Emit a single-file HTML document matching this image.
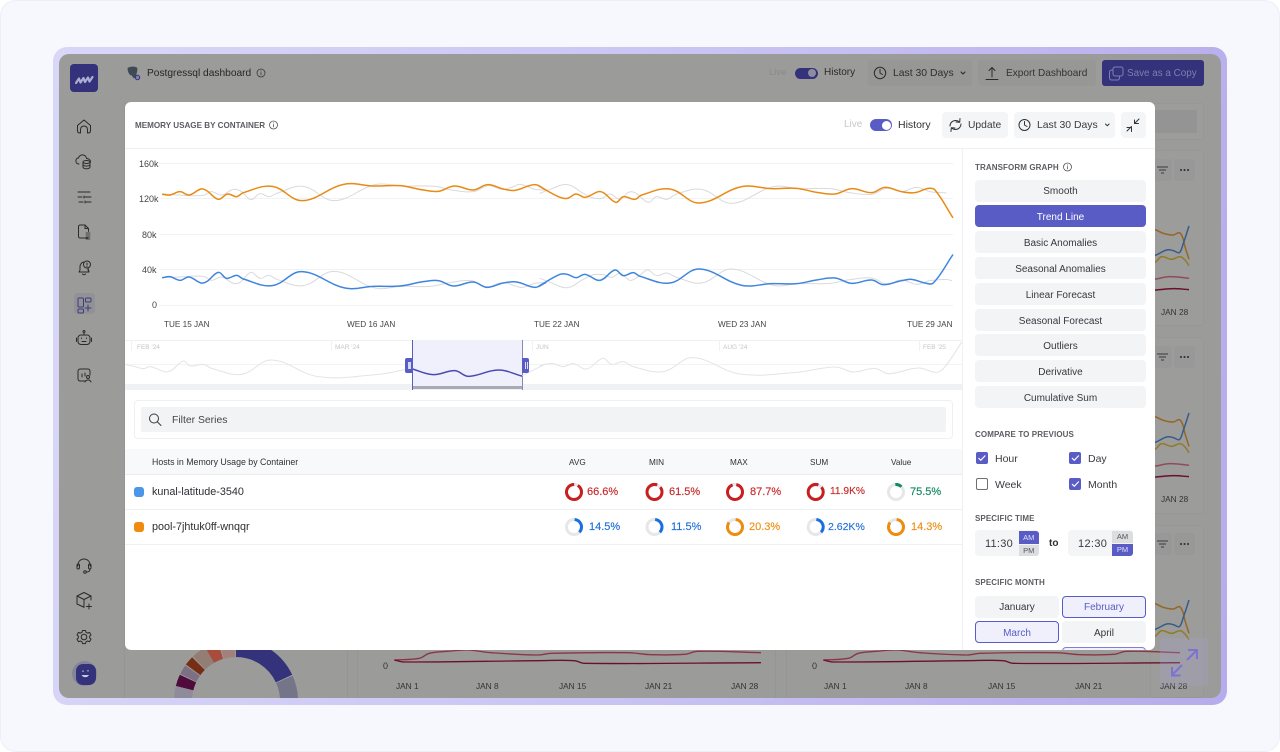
<!DOCTYPE html>
<html lang="en">
<head>
<meta charset="utf-8">
<title>Postgressql dashboard</title>
<style>
html,body{margin:0;padding:0;width:1280px;height:752px;overflow:hidden;background:#fff;font-family:"Liberation Sans",sans-serif}
#page{position:absolute;left:0;top:0;width:1278px;height:750px;background:#f7f8fe;border:1px solid #eceefa;border-radius:16px}
#frame{position:absolute;left:53px;top:47px;width:1174px;height:658px;border-radius:14px;background:linear-gradient(100deg,#d9d7f8 0%,#c8c2f2 55%,#b6abec 100%)}
#dash{position:absolute;left:59px;top:54px;width:1162px;height:644px;border-radius:10px;overflow:hidden;background:#9b9b9a}
#bg{position:absolute;left:0;top:0;width:1280px;height:752px;overflow:hidden}
.abs{position:absolute}
.t{position:absolute;white-space:nowrap;line-height:12px;transform:translateY(-6px)}
.card{position:absolute;background:#9c9c9b;border:1px solid #979797;border-radius:3px;box-sizing:border-box}
#modal{position:absolute;left:125px;top:102px;width:1030px;height:548px;background:#fff;border-radius:6px;overflow:hidden}
.btn{position:absolute;background:#f4f5f6;border-radius:4px}
.tb{position:absolute;width:171px;height:22px;background:#f3f4f6;border-radius:4px;text-align:center;font-size:10px;line-height:26px;color:#37383c}
.lab{font-size:8px;font-weight:bold;color:#5c5d62;letter-spacing:.1px}
.pct{font-size:11px;-webkit-text-stroke:.15px currentColor}
.hd{font-size:8.200px;color:#303136}
.ax{font-size:8.200px;color:#44454a}
.bx{font-size:8.300px;color:#333}
.cb{position:absolute;width:12px;height:12px;border-radius:2px;background:#5a5cc6;box-sizing:border-box}
.mb{position:absolute;width:84px;height:22px;border-radius:4px;text-align:center;font-size:10px;line-height:24px;background:#f3f4f6;color:#37383c;box-sizing:border-box}
.mbs{background:#eff0fb;border:1px solid #5a5cc6;color:#5a5cc6;line-height:22px}
svg{position:absolute;overflow:visible}
</style>
</head>
<body>
<div id="page"></div>
<div id="frame"></div>
<div id="dash"></div>

<div id="bg">
  <div style="position:absolute;left:59px;top:54px;width:1162px;height:644px;border-radius:10px;overflow:hidden">
    <div style="position:absolute;left:-59px;top:-54px;width:1280px;height:752px">

      <div class="abs" style="left:124px;top:102px;width:1px;height:596px;background:#959595"></div>
      <div class="abs" style="left:347px;top:640px;width:1px;height:58px;background:#959595"></div>
      <div class="abs" style="left:357px;top:640px;width:1px;height:58px;background:#959595"></div>
      <div class="abs" style="left:775px;top:640px;width:1px;height:58px;background:#959595"></div>
      <div class="abs" style="left:786px;top:640px;width:1px;height:58px;background:#959595"></div>

      <div class="card" style="left:1150px;top:103px;width:54px;height:37px"></div>
      <div class="abs" style="left:1150px;top:110px;width:47px;height:23px;background:#949494"></div>
      <div class="card" style="left:1150px;top:150px;width:54px;height:176px"></div>
      <div class="card" style="left:1150px;top:337px;width:54px;height:177px"></div>
      <div class="card" style="left:1150px;top:525px;width:54px;height:173px"></div>
      <div class="abs" style="left:1150px;top:159px;width:22px;height:22px;background:#989898;border-radius:3px"></div>
      <div class="abs" style="left:1174px;top:159px;width:21px;height:22px;background:#989898;border-radius:3px"></div>
      <div class="abs" style="left:1150px;top:346px;width:22px;height:22px;background:#989898;border-radius:3px"></div>
      <div class="abs" style="left:1174px;top:346px;width:21px;height:22px;background:#989898;border-radius:3px"></div>
      <div class="abs" style="left:1150px;top:533px;width:22px;height:22px;background:#989898;border-radius:3px"></div>
      <div class="abs" style="left:1174px;top:533px;width:21px;height:22px;background:#989898;border-radius:3px"></div>

      <svg width="1280" height="752" style="left:0;top:0" fill="none">
        <g transform="translate(1140,100) scale(.3333)" stroke-width="4.500" stroke-linejoin="round">
          <polyline stroke="#966626" points="30,385 48,390 70,400 100,405 118,398 128,412 135,440 147,478"/>
          <polyline stroke="#365c88" points="30,468 48,465 80,450 100,452 118,458 130,430 147,378"/>
          <polyline stroke="#927a26" points="30,495 48,485 65,470 95,478 120,470 135,480 147,497"/>
          <polyline stroke="#8f4c58" points="30,540 48,537 90,530 147,535"/>
          <polyline stroke="#6c0f2e" points="30,572 48,570 100,566 147,569"/>
        </g>
        <g transform="translate(1140,287) scale(.3333)" stroke-width="4.500" stroke-linejoin="round">
          <polyline stroke="#966626" points="30,385 48,390 70,400 100,405 118,398 128,412 135,440 147,478"/>
          <polyline stroke="#365c88" points="30,468 48,465 80,450 100,452 118,458 130,430 147,378"/>
          <polyline stroke="#927a26" points="30,495 48,485 65,470 95,478 120,470 135,480 147,497"/>
          <polyline stroke="#8f4c58" points="30,540 48,537 90,530 147,535"/>
          <polyline stroke="#6c0f2e" points="30,572 48,570 100,566 147,569"/>
        </g>
        <g transform="translate(1140,474) scale(.3333)" stroke-width="4.500" stroke-linejoin="round">
          <polyline stroke="#966626" points="30,385 48,390 70,400 100,405 118,398 128,412 135,440 147,478"/>
          <polyline stroke="#365c88" points="30,468 48,465 80,450 100,452 118,458 130,430 147,378"/>
          <polyline stroke="#927a26" points="30,495 48,485 65,470 95,478 120,470 135,480 147,497"/>
        </g>
        <g transform="translate(780,640) scale(.3333)" stroke-width="4" stroke-linejoin="round">
          <polyline stroke="#8a3644" points="130,60 205,55 235,40 290,34 350,30 420,38 560,45 600,40 830,38 900,44 1000,43 1040,34 1200,38"/>
          <polyline stroke="#6c0f2e" points="130,60 160,66 560,62 670,62 700,70 1200,68"/>
        </g>
        <g transform="translate(351,640) scale(.3333)" stroke-width="4" stroke-linejoin="round">
          <polyline stroke="#8a3644" points="130,60 205,55 235,40 290,34 350,30 420,38 560,45 600,40 830,38 900,44 1000,43 1040,34 1230,38"/>
          <polyline stroke="#6c0f2e" points="130,60 160,66 560,62 670,62 700,70 1230,68"/>
        </g>
        <g stroke="#3a3a3a" stroke-width="1">
          <path d="M1157 167h11M1159 170h7M1161 173h3"/>
          <path d="M1157 354h11M1159 357h7M1161 360h3"/>
          <path d="M1157 541h11M1159 544h7M1161 547h3"/>
        </g>
        <g fill="#2a2a2a">
          <circle cx="1181" cy="170" r="1"/><circle cx="1184.500" cy="170" r="1"/><circle cx="1188" cy="170" r="1"/>
          <circle cx="1181" cy="357" r="1"/><circle cx="1184.500" cy="357" r="1"/><circle cx="1188" cy="357" r="1"/>
          <circle cx="1181" cy="544" r="1"/><circle cx="1184.500" cy="544" r="1"/><circle cx="1188" cy="544" r="1"/>
        </g>
        <g stroke-width="18">
          <circle cx="236" cy="701" r="53" pathLength="360" stroke="#33327a" stroke-dasharray="65 360" transform="rotate(-90 236 701)"/>
          <circle cx="236" cy="701" r="53" pathLength="360" stroke="#75758a" stroke-dasharray="35 360" transform="rotate(-24 236 701)"/>
          <circle cx="236" cy="701" r="53" pathLength="360" stroke="#a0817b" stroke-dasharray="15 360" transform="rotate(-106 236 701)"/>
          <circle cx="236" cy="701" r="53" pathLength="360" stroke="#a84c3e" stroke-dasharray="13 360" transform="rotate(-120 236 701)"/>
          <circle cx="236" cy="701" r="53" pathLength="360" stroke="#927e73" stroke-dasharray="14 360" transform="rotate(-134 236 701)"/>
          <circle cx="236" cy="701" r="53" pathLength="360" stroke="#762f14" stroke-dasharray="9 360" transform="rotate(-144 236 701)"/>
          <circle cx="236" cy="701" r="53" pathLength="360" stroke="#7c7184" stroke-dasharray="9 360" transform="rotate(-154 236 701)"/>
          <circle cx="236" cy="701" r="53" pathLength="360" stroke="#4e0b3c" stroke-dasharray="11 360" transform="rotate(-166 236 701)"/>
          <circle cx="236" cy="701" r="53" pathLength="360" stroke="#908b9a" stroke-dasharray="24 360" transform="rotate(-190 236 701)"/>
        </g>
      </svg>

      <span class="t bx" style="left:1161px;top:312px">JAN 28</span>
      <span class="t bx" style="left:1161px;top:499px">JAN 28</span>
      <span class="t" style="left:383px;top:666px;font-size:9px;color:#333">0</span>
      <span class="t" style="left:812px;top:666px;font-size:9px;color:#333">0</span>
      <span class="t bx" style="left:396px;top:686px">JAN 1</span>
      <span class="t bx" style="left:476px;top:686px">JAN 8</span>
      <span class="t bx" style="left:559px;top:686px">JAN 15</span>
      <span class="t bx" style="left:645px;top:686px">JAN 21</span>
      <span class="t bx" style="left:731px;top:686px">JAN 28</span>
      <span class="t bx" style="left:824px;top:686px">JAN 1</span>
      <span class="t bx" style="left:905px;top:686px">JAN 8</span>
      <span class="t bx" style="left:988px;top:686px">JAN 15</span>
      <span class="t bx" style="left:1075px;top:686px">JAN 21</span>
      <span class="t bx" style="left:1160px;top:686px">JAN 28</span>

      <div class="abs" style="left:70px;top:64px;width:28px;height:28px;border-radius:4px;background:#33327a"></div>
      <div class="abs" style="left:74px;top:293px;width:21px;height:21px;border-radius:3px;background:#929296"></div>
      <div class="abs" style="left:72px;top:661px;width:25px;height:25px;border-radius:50%;background:#85859a"></div>
      <div class="abs" style="left:76px;top:664px;width:20px;height:21px;border-radius:7px;background:#33327a"></div>

      <svg width="1280" height="752" style="left:0;top:0" fill="none" stroke="#2b2b2b" stroke-width="1" stroke-linecap="round" stroke-linejoin="round">
        <path d="M76 83l3-4.500 1.500 4 3-4.500 1.500 4 3-4.500 1.500 4 3-4.500" stroke="#aeaed2" stroke-width="2.200"/>
        <path d="M77.500 125.500l6.500-5.500 6.500 5.500v5c0 1.500-1 2.500-2.500 2.500h-.5v-3.500c0-2-1.500-3.500-3.500-3.500s-3.500 1.500-3.500 3.500v3.500h-.5c-1.500 0-2.500-1-2.500-2.500z"/>
        <g transform="translate(0,-1)">
          <path d="M79 165c-2.500 0-3.500-2-3-4 .3-1.500 1.500-2 2.500-2 .5-2 2.500-3.500 4.500-3 2 .2 3.500 1.800 3.500 3.500 2 0 4 1.200 4 3.500"/>
          <ellipse cx="86.500" cy="163" rx="3.500" ry="1.500"/>
          <path d="M83 163v5c0 1 1.500 1.800 3.500 1.800s3.500-.8 3.500-1.800v-5M83 165.500c0 1 1.500 1.500 3.500 1.500s3.500-.5 3.500-1.500"/>
        </g>
        <path d="M78 192h12M78 197h4M85 197h6M83 202h-4M86 202h5"/>
        <path d="M84 196v2M85 201v2"/>
        <path d="M88 238h-8c-.8 0-1.500-.7-1.500-1.500v-10c0-.8.700-1.500 1.500-1.500h5l3.500 3.500v3"/>
        <path d="M85 225v3.500h3.500"/>
        <path d="M86 233h4M86 235h4M86 237h4M86 239h4" stroke-width=".8"/>
        <path d="M79 272c0 0 1-1 1-2.500v-3c0-2 1.500-4 3.500-4.500M88 268v1.500c0 1.500 1 2.500 1 2.500zM79 272h10M82.500 274c.5 1 2.500 1 3 0"/>
        <circle cx="87" cy="264.500" r="3.500"/>
        <path d="M87 263v2M87 266.200v.3"/>
        <g stroke="#3c3c78">
          <rect x="78" y="298" width="5.500" height="9" rx="1"/>
          <rect x="78" y="309" width="5.500" height="4" rx="1"/>
          <rect x="85.500" y="298" width="5.500" height="4" rx="1"/>
          <path d="M88 305v6M85 308h6"/>
        </g>
        <rect x="78" y="335" width="12" height="9.500" rx="3"/>
        <path d="M84 335v-2.500M76.500 338v3.500M91.500 338v3.500M82 341.500h4"/>
        <circle cx="84" cy="331.500" r="1"/>
        <path d="M81.500 338v.5M86.500 338v.5"/>
        <path d="M85 381h-5c-1 0-2-1-2-2v-8c0-1 1-2 2-2h8c1 0 2 1 2 2v4"/>
        <path d="M82 377v-3M85 376v-3"/>
        <circle cx="88" cy="377" r="1.500"/>
        <path d="M85 382c.5-1.500 1.500-2 3-2s2.500.5 3 2"/>
        <path d="M78 566v-1c0-3.500 2.700-6 6-6s6 2.500 6 6v1"/>
        <rect x="77" y="564" width="2.500" height="5" rx="1.200"/>
        <rect x="88.500" y="564" width="2.500" height="5" rx="1.200"/>
        <path d="M90 569c0 2-1.500 3-3.500 3"/>
        <circle cx="85" cy="572" r="1.300"/>
        <path d="M91 600v-4l-7-3.500-7 3.500v8l6.500 3"/>
        <path d="M77 596l7 3.500 7-3.500M84 599.500v8"/>
        <path d="M89 604v5M86.500 606.500h5"/>
        <circle cx="84" cy="637" r="2.800"/>
        <path d="M82.500 630.500h3l.5 1.800 1.700.8 1.800-.7 1.500 2.600-1.400 1.300v1.500l1.400 1.300-1.500 2.600-1.800-.7-1.700.8-.5 1.800h-3l-.5-1.800-1.700-.8-1.800.7-1.500-2.600 1.400-1.300v-1.500l-1.400-1.300 1.500-2.600 1.800.7 1.700-.8z"/>
        <path d="M83 671v.5M88 670.500v.5" stroke="#c0c0dc" stroke-width="1.200"/>
        <path d="M82 675.500c1.500 2 5 2 6.500 0z" fill="#d4d4e6" stroke="#d4d4e6" stroke-width=".5"/>
        <path d="M128 68c2-1.500 8-1.500 9 0 .5 2-.5 5-1 7-.5 1.500-1 3-2 3-1 0-1.500-2-2-3-1 .5-2 0-2.500-1-1-1.500-2-4-1.500-6z" fill="#3e4a55" stroke="#3e4a55" stroke-width=".5"/>
        <circle cx="137.500" cy="77.500" r="2.200" stroke="#33327a" fill="#8080a8"/>
        <circle cx="261" cy="73" r="4" stroke="#3a3a3a" stroke-width=".8"/>
        <path d="M261 72.500v2.500M261 70.800v.3" stroke="#3a3a3a" stroke-width=".8"/>
      </svg>

      <span class="t" style="left:147px;top:74px;font-size:10.200px;color:#262626">Postgressql dashboard</span>

      <span class="t" style="left:769px;top:73px;font-size:9.500px;color:#8a8a8a">Live</span>
      <div class="abs" style="left:795px;top:67.500px;width:23px;height:11px;border-radius:6px;background:#33327a"></div>
      <div class="abs" style="left:808px;top:69px;width:8px;height:8px;border-radius:50%;background:#8d8d9d"></div>
      <span class="t" style="left:824px;top:73px;font-size:10px;color:#2a2a2a">History</span>
      <div class="abs" style="left:868px;top:60px;width:104px;height:26px;border-radius:4px;background:#979796"></div>
      <svg width="1280" height="752" style="left:0;top:0" fill="none" stroke="#2b2b2b" stroke-width="1" stroke-linecap="round" stroke-linejoin="round">
        <circle cx="880" cy="73" r="5.700"/>
        <path d="M880 69.500v3.500l2.500 1.500"/>
        <path d="M961 72l2 2 2-2" stroke-width="1.100"/>
      </svg>
      <span class="t" style="left:893px;top:74px;font-size:10.400px;color:#2f2f2f">Last 30 Days</span>
      <div class="abs" style="left:978px;top:60px;width:118px;height:26px;border-radius:4px;background:#979796"></div>
      <svg width="1280" height="752" style="left:0;top:0" fill="none" stroke="#2b2b2b" stroke-width="1" stroke-linecap="round" stroke-linejoin="round">
        <path d="M992 77v-9M989 70.500l3-3 3 3M986 79.500h12"/>
      </svg>
      <span class="t" style="left:1006px;top:74px;font-size:10.100px;color:#333">Export Dashboard</span>
      <div class="abs" style="left:1102px;top:60px;width:102px;height:26px;border-radius:3px;background:#33327a"></div>
      <svg width="1280" height="752" style="left:0;top:0" fill="none" stroke="#7f7fb4" stroke-width="1" stroke-linecap="round" stroke-linejoin="round">
        <rect x="1113" y="67" width="10" height="9" rx="2"/>
        <path d="M1113 70h-1.500c-1 0-2 1-2 2v6c0 1 1 2 2 2h6c1 0 2-1 2-2v-2"/>
      </svg>
      <span class="t" style="left:1127px;top:74px;font-size:9.900px;color:#7f7fb0">Save as a Copy</span>

      <div class="abs" style="left:1160px;top:638px;width:48px;height:48px;border-radius:3px;background:rgba(165,160,200,.28)"></div>
      <svg width="1280" height="752" style="left:0;top:0" fill="none" stroke="#7b74d2" stroke-width="2">
        <path d="M1172 675l10-10M1172 667v8.500h8.500"/>
        <path d="M1187 660l9.500-9.500M1188 650h9v9"/>
      </svg>
    </div>
  </div>
</div>

<div id="modal">
  <div style="position:absolute;left:-125px;top:-102px;width:1280px;height:752px">
    <div class="abs" style="left:125px;top:148px;width:1030px;height:1px;background:#eef0f2"></div>
    <div class="abs" style="left:962px;top:148px;width:1px;height:502px;background:#eef0f2"></div>
    <span class="t lab" style="left:135px;top:126px;letter-spacing:0;font-size:8.100px">MEMORY USAGE BY CONTAINER</span>
    <span class="t" style="left:844px;top:125px;font-size:10px;color:#c6c7ca">Live</span>
    <div class="abs" style="left:870px;top:119px;width:22px;height:12px;border-radius:6px;background:#5a5cc6"></div>
    <div class="abs" style="left:882px;top:120.500px;width:9px;height:9px;border-radius:50%;background:#fff"></div>
    <span class="t" style="left:898px;top:125px;font-size:10.500px;color:#2d2e33">History</span>
    <div class="btn" style="left:942px;top:112px;width:66px;height:26px"></div>
    <span class="t" style="left:968px;top:126px;font-size:10.300px;color:#3a3b40">Update</span>
    <div class="btn" style="left:1014px;top:112px;width:101px;height:26px"></div>
    <span class="t" style="left:1037px;top:126px;font-size:10.400px;color:#3a3b40">Last 30 Days</span>
    <div class="btn" style="left:1121px;top:112px;width:25px;height:26px"></div>

    <svg width="1280" height="752" style="left:0;top:0" fill="none" stroke-linecap="round" stroke-linejoin="round">
      <g stroke="#55565b" stroke-width=".8">
        <circle cx="273.500" cy="125" r="4"/><path d="M273.500 124.500v2.500M273.500 122.800v.3"/>
        <circle cx="1067.500" cy="167" r="4"/><path d="M1067.500 166.500v2.500M1067.500 164.800v.3"/>
      </g>
      <g stroke="#303136" stroke-width="1">
        <path d="M950 126c0-3 2.500-5.500 5.500-5.500 1.500 0 3 .6 4 1.600M961 124c0 3-2.500 5.500-5.500 5.500-1.500 0-3-.6-4-1.600"/>
        <path d="M960 118.500l-.3 3.800-3.700-.3M951 131.500l.3-3.800 3.700.3"/>
        <circle cx="1024.500" cy="125" r="5.500"/>
        <path d="M1024.500 121.500v3.500l2.500 1.500"/>
        <path d="M1105.500 124l1.800 1.800 1.800-1.800"/>
        <path d="M1127 131l4.500-4.500M1127 127.500h4.500v4M1139 119l-4.500 4.500M1134.500 120v3.500h4"/>
      </g>
    </svg>

    <div class="abs" style="left:159px;top:163px;width:794px;height:1px;background:#f1f2f4"></div>
    <div class="abs" style="left:159px;top:198px;width:794px;height:1px;background:#f1f2f4"></div>
    <div class="abs" style="left:159px;top:234px;width:794px;height:1px;background:#f1f2f4"></div>
    <div class="abs" style="left:159px;top:269px;width:794px;height:1px;background:#f1f2f4"></div>
    <div class="abs" style="left:159px;top:305px;width:794px;height:1px;background:#f1f2f4"></div>
    <span class="t" style="left:139px;top:164px;font-size:9px;color:#44454a">160k</span>
    <span class="t" style="left:139px;top:199px;font-size:9px;color:#44454a">120k</span>
    <span class="t" style="left:142px;top:235px;font-size:9px;color:#44454a">80k</span>
    <span class="t" style="left:142px;top:270px;font-size:9px;color:#44454a">40k</span>
    <span class="t" style="left:152px;top:305px;font-size:9px;color:#44454a">0</span>
    <span class="t ax" style="left:164px;top:325px">TUE 15 JAN</span>
    <span class="t ax" style="left:347px;top:325px">WED 16 JAN</span>
    <span class="t ax" style="left:534px;top:325px">TUE 22 JAN</span>
    <span class="t ax" style="left:718px;top:325px">WED 23 JAN</span>
    <span class="t ax" style="left:907px;top:325px">TUE 29 JAN</span>

    <svg width="1280" height="752" style="left:0;top:0" fill="none" stroke-linejoin="round" stroke-linecap="round">
      <g transform="translate(125,150) scale(.33333)" stroke-width="3" stroke="#d9dadc">
        <polyline points="113,131 160,135 235,136 258,125 290,135 325,118 350,125 378,149 405,131 432,140 455,130 535,109 628,152 750,104 830,108 930,109 980,120 1045,125 1090,107 1130,118 1160,112 1185,103 1230,118 1260,120"/>
        <polyline points="113,383 160,381 235,379 260,391 290,381 325,400 345,397 378,367 405,385 432,376 455,388 535,407 628,364 750,414 830,409 915,409 985,396 1040,392 1085,410 1135,398 1190,412 1230,400 1260,398"/>
      </g>
      <g transform="translate(540,150) scale(.33333)" stroke-width="3" stroke="#d9dadc">
        <polyline points="0,130 30,118 82,104 130,130 155,143 185,145 210,132 240,148 265,127 285,128 325,157 350,140 380,148 410,132 485,118 575,160 700,110 775,116 870,116 930,128 995,133 1040,115 1085,125 1130,112 1170,125 1218,129"/>
        <polyline points="0,385 30,397 82,413 130,388 160,374 190,374 215,382 240,370 270,391 295,380 322,360 350,377 380,369 410,382 485,399 575,357 700,406 775,401 870,400 930,389 995,384 1040,402 1085,390 1130,403 1170,392 1218,388 1235,392"/>
      </g>
      <g transform="translate(125,150) scale(.33333)" stroke-width="4.500">
        <polyline stroke="#e98a14" points="113,133 135,135 165,125 192,135 228,117 245,122 280,148 308,132 335,140 355,128 442,109 532,152 656,103 745,108 825,107 895,120 940,124 988,108 1045,120 1088,104 1135,117 1170,121 1230,104 1262,120"/>
        <polyline stroke="#3f85de" points="113,383 135,380 165,391 192,381 228,399 245,395 280,367 305,385 335,376 355,387 442,407 530,365 660,414 745,409 825,408 895,395 940,392 985,408 1045,396 1085,412 1135,399 1175,396 1230,412 1262,398"/>
      </g>
      <g transform="translate(540,150) scale(.33333)" stroke-width="4.500">
        <polyline stroke="#e98a14" points="-3,108 55,140 82,145 108,132 135,142 175,125 190,128 228,157 250,140 285,148 305,135 390,117 478,159 605,110 695,116 770,115 830,127 885,132 935,116 995,128 1035,112 1085,125 1125,128 1165,115 1185,120 1238,202"/>
        <polyline stroke="#3f85de" points="-3,408 60,373 82,373 108,383 135,373 180,391 225,360 250,377 280,368 300,379 390,399 478,357 605,406 695,401 770,401 830,390 885,384 935,400 995,390 1030,404 1085,392 1115,388 1155,399 1180,399 1238,315"/>
      </g>
    </svg>

    <div class="abs" style="left:125px;top:340px;width:837px;height:1px;background:#eef0f2"></div>
    <div class="abs" style="left:125px;top:364px;width:837px;height:1px;background:#f2f3f4"></div>
    <div class="abs" style="left:125px;top:384px;width:837px;height:6px;background:#f0f1f3"></div>
    <div class="abs" style="left:131px;top:341px;width:1px;height:10px;background:#f0f1f3"></div>
    <div class="abs" style="left:331px;top:341px;width:1px;height:10px;background:#f0f1f3"></div>
    <div class="abs" style="left:532px;top:341px;width:1px;height:10px;background:#f0f1f3"></div>
    <div class="abs" style="left:719px;top:341px;width:1px;height:10px;background:#f0f1f3"></div>
    <div class="abs" style="left:919px;top:341px;width:1px;height:10px;background:#f0f1f3"></div>
    <span class="t" style="left:137px;top:348px;font-size:6.500px;color:#c4c5ca">FEB '24</span>
    <span class="t" style="left:335px;top:348px;font-size:6.500px;color:#c4c5ca">MAR '24</span>
    <span class="t" style="left:536px;top:348px;font-size:6.500px;color:#c4c5ca">JUN</span>
    <span class="t" style="left:723px;top:348px;font-size:6.500px;color:#c4c5ca">AUG '24</span>
    <span class="t" style="left:923px;top:348px;font-size:6.500px;color:#c4c5ca">FEB '25</span>
    <div class="abs" style="left:412px;top:340px;width:110px;height:50px;background:#eff0fb"></div>
    <div class="abs" style="left:412px;top:386px;width:110px;height:3px;background:#a9a9b0"></div>
    <div class="abs" style="left:412px;top:340px;width:1px;height:50px;background:#5a5cc6"></div>
    <div class="abs" style="left:521.500px;top:340px;width:1px;height:50px;background:#8788b8"></div>
    <svg width="1280" height="752" style="left:0;top:0" fill="none" stroke-linejoin="round" stroke-linecap="round">
      <g transform="translate(125,335) scale(.33333)" stroke="#e3e4e6" stroke-width="3">
        <polyline points="0,88 30,95 55,101 75,95 130,110 175,78 195,93 235,88 260,100 350,118 440,75 580,125 760,118 840,104"/>
        <polyline points="1190,123 1225,105 1260,88"/>
      </g>
      <g transform="translate(540,335) scale(.33333)" stroke="#e3e4e6" stroke-width="3">
        <polyline points="0,92 35,85 70,95 100,86 140,102 188,70 215,88 250,80 280,95 370,110 458,68 600,117 770,112 885,96 940,111 1005,100 1045,116 1135,99 1190,112 1215,95 1265,22"/>
      </g>
      <polyline transform="translate(125,335) scale(.33333)" stroke="#4a4bb0" stroke-width="4.500" points="862,102 925,119 990,107 1030,124 1120,105 1190,123"/>
    </svg>
    <div class="abs" style="left:405px;top:358px;width:8px;height:15px;border-radius:2px 0 0 2px;background:#5a5cc6"></div>
    <div class="abs" style="left:408px;top:362px;width:2.500px;height:7px;background:#d5d6f2"></div>
    <div class="abs" style="left:522px;top:358px;width:7px;height:15px;border-radius:0 2px 2px 0;background:#5a5cc6"></div>
    <div class="abs" style="left:524.500px;top:362px;width:1px;height:7px;background:#dfe0f5"></div>
    <div class="abs" style="left:526.500px;top:362px;width:1px;height:7px;background:#dfe0f5"></div>

    <div class="abs" style="left:134px;top:400px;width:817px;height:37px;border:1px solid #eef0f2;border-radius:4px"></div>
    <div class="abs" style="left:141px;top:407px;width:805px;height:25px;background:#f2f3f5;border-radius:2px"></div>
    <svg width="1280" height="752" style="left:0;top:0" fill="none" stroke="#3a3b40" stroke-width="1" stroke-linecap="round">
      <circle cx="154" cy="418.500" r="4.500"/><path d="M157.500 422l3.500 3.500"/>
    </svg>
    <span class="t" style="left:172px;top:421px;font-size:10.400px;color:#45464b">Filter Series</span>

    <div class="abs" style="left:125px;top:449px;width:837px;height:25px;background:#f8f9fb"></div>
    <div class="abs" style="left:125px;top:474px;width:837px;height:1px;background:#e9ebee"></div>
    <div class="abs" style="left:125px;top:509px;width:837px;height:1px;background:#eef0f2"></div>
    <div class="abs" style="left:125px;top:544px;width:837px;height:1px;background:#eef0f2"></div>
    <span class="t hd" style="left:152px;top:462px;font-size:8.800px">Hosts in Memory Usage by Container</span>
    <span class="t hd" style="left:569px;top:463px;">AVG</span>
    <span class="t hd" style="left:649px;top:463px;">MIN</span>
    <span class="t hd" style="left:730px;top:463px;">MAX</span>
    <span class="t hd" style="left:810px;top:463px;">SUM</span>
    <span class="t hd" style="left:891px;top:463px;">Value</span>

    <div class="abs" style="left:134px;top:487px;width:10px;height:10px;border-radius:3px;background:#4a96e8"></div>
    <div class="abs" style="left:134px;top:522px;width:10px;height:10px;border-radius:3px;background:#ef8c0e"></div>
    <span class="t" style="left:152px;top:492px;font-size:10.800px;color:#2d2e33">kunal-latitude-3540</span>
    <span class="t" style="left:152px;top:527px;font-size:10.800px;color:#2d2e33">pool-7jhtuk0ff-wnqqr</span>

    <svg width="1280" height="752" style="left:0;top:0" fill="none" stroke-width="3">
      <g stroke="#e5e7e9">
        <circle cx="574" cy="492" r="7.500"/><circle cx="654.500" cy="492" r="7.500"/><circle cx="735" cy="492" r="7.500"/><circle cx="815.700" cy="492" r="7.500"/><circle cx="896" cy="492" r="7.500"/>
        <circle cx="574" cy="527" r="7.500"/><circle cx="654.500" cy="527" r="7.500"/><circle cx="735" cy="527" r="7.500"/><circle cx="815.700" cy="527" r="7.500"/><circle cx="896" cy="527" r="7.500"/>
      </g>
      <g stroke="#c81e1e">
        <circle cx="574" cy="492" r="7.500" pathLength="100" stroke-dasharray="92 100" transform="rotate(-60 574 492)"/>
        <circle cx="654.500" cy="492" r="7.500" pathLength="100" stroke-dasharray="92 100" transform="rotate(-40 654.500 492)"/>
        <circle cx="735" cy="492" r="7.500" pathLength="100" stroke-dasharray="92 100" transform="rotate(-80 735 492)"/>
        <circle cx="815.700" cy="492" r="7.500" pathLength="100" stroke-dasharray="92 100" transform="rotate(-40 815.700 492)"/>
      </g>
      <circle cx="896" cy="492" r="7.500" stroke="#0e8a5f" pathLength="100" stroke-dasharray="14 100" transform="rotate(-95 896 492)"/>
      <g stroke="#1a6fe0">
        <circle cx="574" cy="527" r="7.500" pathLength="100" stroke-dasharray="36 100" transform="rotate(-85 574 527)"/>
        <circle cx="654.500" cy="527" r="7.500" pathLength="100" stroke-dasharray="36 100" transform="rotate(-85 654.500 527)"/>
        <circle cx="815.700" cy="527" r="7.500" pathLength="100" stroke-dasharray="36 100" transform="rotate(-85 815.700 527)"/>
      </g>
      <g stroke="#ef8c0e">
        <circle cx="735" cy="527" r="7.500" pathLength="100" stroke-dasharray="84 100" transform="rotate(-85 735 527)"/>
        <circle cx="896" cy="527" r="7.500" pathLength="100" stroke-dasharray="84 100" transform="rotate(-85 896 527)"/>
      </g>
    </svg>

    <span class="t pct" style="left:587px;top:492px;color:#c72a2a">66.6%</span>
    <span class="t pct" style="left:669px;top:492px;color:#c72a2a">61.5%</span>
    <span class="t pct" style="left:750px;top:492px;color:#c72a2a">87.7%</span>
    <span class="t pct" style="left:830px;top:492px;color:#c72a2a;font-size:10.200px">11.9K%</span>
    <span class="t pct" style="left:910px;top:492px;color:#15875f">75.5%</span>
    <span class="t pct" style="left:589px;top:527px;color:#1f6fdc">14.5%</span>
    <span class="t pct" style="left:671px;top:527px;color:#1f6fdc">11.5%</span>
    <span class="t pct" style="left:749px;top:527px;color:#ed8f16">20.3%</span>
    <span class="t pct" style="left:828px;top:527px;color:#1f6fdc;font-size:10.500px">2.62K%</span>
    <span class="t pct" style="left:911px;top:527px;color:#ed8f16">14.3%</span>

    <span class="t lab" style="left:975px;top:168px;">TRANSFORM GRAPH</span>
    <div class="tb" style="left:975px;top:180px;line-height:23px">Smooth</div>
    <div class="tb" style="left:975px;top:205px;background:#5a5cc6;color:#fff">Trend Line</div>
    <div class="tb" style="left:975px;top:231px;">Basic Anomalies</div>
    <div class="tb" style="left:975px;top:257px;">Seasonal Anomalies</div>
    <div class="tb" style="left:975px;top:283px;">Linear Forecast</div>
    <div class="tb" style="left:975px;top:309px;">Seasonal Forecast</div>
    <div class="tb" style="left:975px;top:334px;">Outliers</div>
    <div class="tb" style="left:975px;top:360px;">Derivative</div>
    <div class="tb" style="left:975px;top:386px;">Cumulative Sum</div>

    <span class="t lab" style="left:975px;top:435px;">COMPARE TO PREVIOUS</span>
    <div class="cb" style="left:975.500px;top:452px;"></div>
    <div class="cb" style="left:1069px;top:452px;"></div>
    <div class="cb" style="left:975.500px;top:478px;background:#fff;border:1.200px solid #6f7074"></div>
    <div class="cb" style="left:1069px;top:478px;"></div>
    <svg width="1280" height="752" style="left:0;top:0" fill="none" stroke="#fff" stroke-width="1.200">
      <path d="M978.500 458l2.300 2.300 4.500-4.800"/>
      <path d="M1072 458l2.300 2.300 4.500-4.800"/>
      <path d="M1072 484l2.300 2.300 4.500-4.800"/>
    </svg>
    <span class="t" style="left:995px;top:459px;font-size:10.500px;color:#3a3b40">Hour</span>
    <span class="t" style="left:1088px;top:459px;font-size:10.500px;color:#3a3b40">Day</span>
    <span class="t" style="left:995px;top:485px;font-size:10.500px;color:#3a3b40">Week</span>
    <span class="t" style="left:1088px;top:485px;font-size:10.500px;color:#3a3b40">Month</span>

    <span class="t lab" style="left:975px;top:519px;">SPECIFIC TIME</span>
    <div class="btn" style="left:975px;top:530px;width:64px;height:26px"></div>
    <div class="btn" style="left:1068px;top:530px;width:65px;height:26px"></div>
    <span class="t" style="left:985px;top:544px;font-size:11px;letter-spacing:.25px;color:#3a3b40">11:30</span>
    <span class="t" style="left:1078px;top:544px;font-size:11px;letter-spacing:.35px;color:#3a3b40">12:30</span>
    <span class="t" style="left:1049px;top:544px;font-size:10px;font-weight:bold;color:#303136">to</span>
    <div class="abs" style="left:1018.500px;top:530.500px;width:20.500px;height:13px;background:#5a5cc6;border-radius:0 3px 0 0;color:#dfe0f7;font-size:7.500px;text-align:center;line-height:13px">AM</div>
    <div class="abs" style="left:1018.500px;top:544.500px;width:20.500px;height:11.500px;background:#dcdde0;border-radius:0 0 3px 0;color:#55565b;font-size:7.500px;text-align:center;line-height:11.500px">PM</div>
    <div class="abs" style="left:1112px;top:530.500px;width:21px;height:12.500px;background:#dcdde0;border-radius:0 3px 0 0;color:#55565b;font-size:7.500px;text-align:center;line-height:12.500px">AM</div>
    <div class="abs" style="left:1112px;top:544px;width:21px;height:12px;background:#5a5cc6;border-radius:0 0 3px 0;color:#dfe0f7;font-size:7.500px;text-align:center;line-height:12px">PM</div>

    <span class="t lab" style="left:975px;top:583px;">SPECIFIC MONTH</span>
    <div class="mb" style="left:975px;top:596px;">January</div>
    <div class="mb mbs" style="left:1062px;top:595.500px;">February</div>
    <div class="mb mbs" style="left:975px;top:621px;line-height:23px">March</div>
    <div class="mb" style="left:1062px;top:621px;line-height:25px">April</div>
    <div class="mb mbs" style="left:1062px;top:647px;border-color:#7f80d4"></div>
  </div>
</div>
<script>
document.querySelectorAll('polyline').forEach(function(pl){
  var n=pl.getAttribute('points').trim().split(/\s+/).map(function(s){var a=s.split(',');return [+a[0],+a[1]];});
  var d='M'+n[0][0]+' '+n[0][1],k=0.38;
  function L(a,b){return Math.hypot(a[0]-b[0],a[1]-b[1])||1;}
  for(var i=0;i<n.length-1;i++){
    var p0=n[i-1]||n[i],p1=n[i],p2=n[i+1],p3=n[i+2]||p2;
    var d01=L(p0,p1),d12=L(p1,p2),d23=L(p2,p3);
    var s1=k*d12/(d01+d12),s2=k*d12/(d12+d23);
    d+=' C'+(p1[0]+(p2[0]-p0[0])*s1).toFixed(1)+' '+(p1[1]+(p2[1]-p0[1])*s1).toFixed(1)+' '+
        (p2[0]-(p3[0]-p1[0])*s2).toFixed(1)+' '+(p2[1]-(p3[1]-p1[1])*s2).toFixed(1)+' '+p2[0]+' '+p2[1];
  }
  var path=document.createElementNS('http://www.w3.org/2000/svg','path');
  Array.prototype.forEach.call(pl.attributes,function(a){if(a.name!=='points')path.setAttribute(a.name,a.value);});
  path.setAttribute('d',d);
  pl.parentNode.replaceChild(path,pl);
});
</script>
</body>
</html>
